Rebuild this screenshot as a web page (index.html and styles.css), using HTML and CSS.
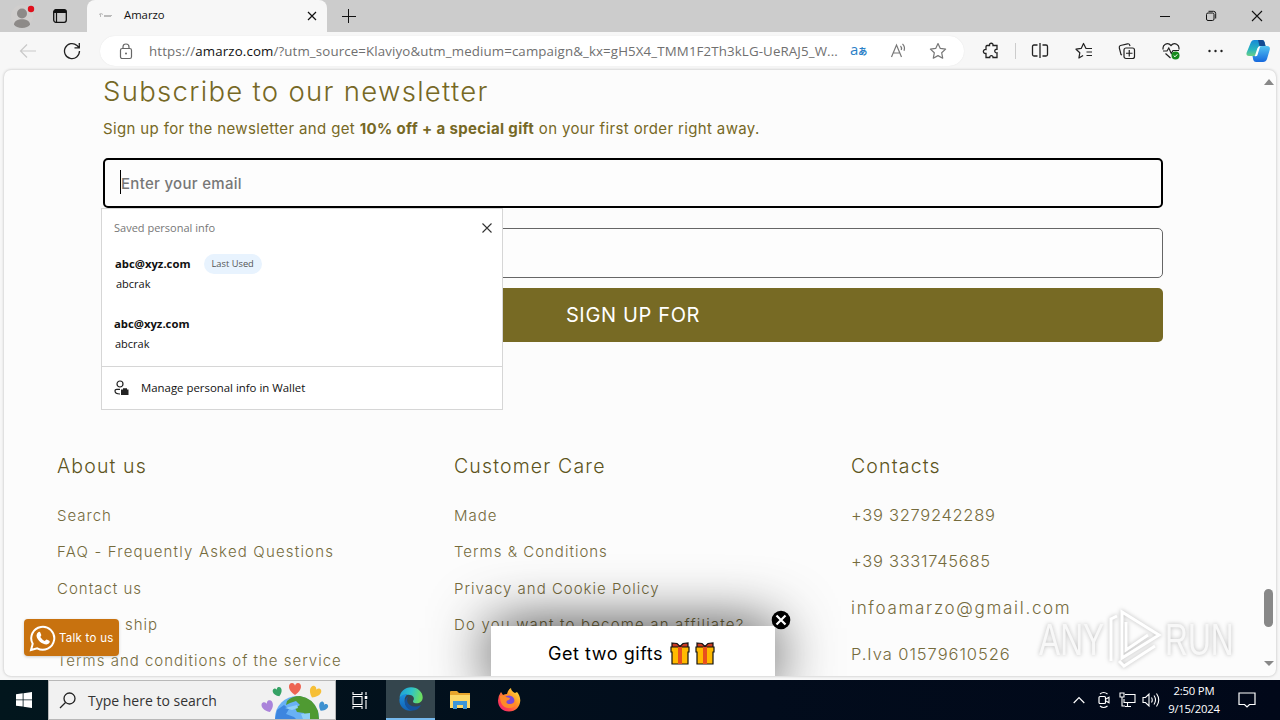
FILE: index.html
```html
<!DOCTYPE html>
<html lang="en">
<head>
<meta charset="utf-8">
<title>Amarzo</title>
<link rel="stylesheet" href="styles.css">
</head>
<body>
<div class="desktop">
  <header class="tabbar">
    <div class="profile">
      <svg width="30" height="30" viewBox="0 0 30 30"><circle cx="14" cy="15" r="11" fill="#d0cecd"/><circle cx="14" cy="12.500" r="5" fill="#8d8a88"/><path d="M6 23.500c0-7 16-7 16 0-2 4.500-14 4.500-16 0z" fill="#8d8a88"/><circle cx="23" cy="8" r="3.200" fill="#e0101c"/></svg>
    </div>
    <svg class="workspaces" width="16" height="16" viewBox="0 0 16 16"><rect x="1.700" y="1.700" width="12.600" height="12.600" rx="2.200" fill="none" stroke="#111" stroke-width="1.300"/><path d="M1.700 5V3.500Q2 1.500 4 1.500h8q2 0 2.300 2V5z" fill="#111"/><path d="M4.500 5v9" stroke="#111" stroke-width="1.200"/></svg>
    <div class="tab">
      <svg class="favicon" width="16" height="16" viewBox="0 0 16 16"><path d="M1 6.500q2-2 4 0M2.500 6v3M6 7.500h8M6 8.500h7" stroke="#bbb" fill="none"/></svg>
      <span class="tab-title">Amarzo</span>
      <svg class="tab-close" width="10" height="10" viewBox="0 0 10 10"><path d="M1 1l8 8M9 1l-8 8" stroke="#111" stroke-width="1.200"/></svg>
    </div>
    <svg class="newtab" width="14" height="14" viewBox="0 0 14 14"><path d="M6.500 0v14M0 7.500h14" stroke="#111"/></svg>
    <div class="winctl">
      <svg width="12" height="12" viewBox="0 0 12 12"><path d="M1 6.500h10" stroke="#111"/></svg>
      <svg width="12" height="12" viewBox="0 0 12 12"><rect x="1.500" y="3" width="7.500" height="7.500" rx="1.500" fill="none" stroke="#111"/><path d="M3.500 1.300h5q2.200 0 2.200 2.200v5" fill="none" stroke="#111"/></svg>
      <svg width="12" height="12" viewBox="0 0 12 12"><path d="M1 1l10 10M11 1L1 11" stroke="#111" stroke-width="1.100"/></svg>
    </div>
  </header>

  <nav class="toolbar">
    <svg class="back" width="18" height="16" viewBox="0 0 18 16"><path d="M17 8H2M8 1.500L1.500 8 8 14.500" fill="none" stroke="#c9c9c9" stroke-width="1.200"/></svg>
    <svg class="reload" width="18" height="18" viewBox="0 0 18 18"><path d="M16.500 9A7.500 7.500 0 1 1 14 3.500L16 5.500M16.300 1v4.800h-4.800" fill="none" stroke="#222" stroke-width="1.300"/></svg>
    <div class="address">
      <svg class="lock" width="14" height="17" viewBox="0 0 14 17"><rect x="1.500" y="5.500" width="11" height="10" rx="1.800" fill="none" stroke="#666" stroke-width="1.200"/><path d="M4 5.500V4q0-3 3-3t3 3v1.500" fill="none" stroke="#666" stroke-width="1.200"/><circle cx="7" cy="10.500" r="1" fill="#666"/></svg>
      <span class="url">https://<b>amarzo.com</b>/?utm_source=Klaviyo&amp;utm_medium=campaign&amp;_kx=gH5X4_TMM1F2Th3kLG-UeRAJ5_W...</span>
      <span class="translate">a<i>あ</i></span>
      <svg class="read" width="18" height="16" viewBox="0 0 18 16"><path d="M1.500 14L6.500 2l5 12M3.300 10h6.500M10.500 3q1.500 1.500.8 4M12.500.8q3 3 1.500 7" fill="none" stroke="#777" stroke-width="1.200"/></svg>
      <svg class="star" width="18" height="18" viewBox="0 0 18 18"><path d="M9 1.500l2.300 4.900 5.300.7-3.900 3.700 1 5.400L9 13.600l-4.700 2.600 1-5.400L1.400 7.100l5.300-.7z" fill="none" stroke="#777" stroke-width="1.200" stroke-linejoin="round"/></svg>
    </div>
    <div class="actions">
      <svg width="18" height="18" viewBox="0 0 18 18"><path d="M5 3.500h2.500c-.5-3 4-3 3.500 0h4v3.800c-3-.4-3 3.900 0 3.500v4.700h-4c.3-2.500-3.500-2.500-3.300 0H4v-4c-3.500.4-3.500-4.500 0-4V5q0-1.500 1-1.500z" fill="none" stroke="#222" stroke-width="1.300"/></svg>
      <i class="divider"></i>
      <svg width="18" height="18" viewBox="0 0 18 18"><path d="M6.500 3H3Q1.500 3 1.500 4.500v8Q1.500 14 3 14h3.500M11.500 3H15q1.500 0 1.500 1.500v8q0 1.500-1.500 1.500h-3.500M9 1v15" fill="none" stroke="#222" stroke-width="1.300"/></svg>
      <svg width="18" height="18" viewBox="0 0 18 18"><path d="M15 6.500h-4L8.500 1.500 6.200 6.400l-5.200.8 3.800 3.600-.9 5.200 4.200-2.500M11.500 6.500H17M11.500 10H17M11.500 13.500H17" fill="none" stroke="#222" stroke-width="1.200" stroke-linejoin="round"/></svg>
      <svg width="18" height="18" viewBox="0 0 18 18"><rect x="6" y="6" width="10.500" height="10.500" rx="2" fill="none" stroke="#222" stroke-width="1.200"/><path d="M11.250 8v6.500M8 11.250h6.500M4 13l-1-.5L1.300 5.800Q1 4 2.500 3.500l7-1.700q1.800-.3 2.200 1.200l.3 1" fill="none" stroke="#222" stroke-width="1.200"/></svg>
      <svg width="18" height="18" viewBox="0 0 18 18"><path d="M1.200 7.500C0 3 5.500-.5 9 3.500c3.500-4 9-.5 7.800 4M1 9h4l1.800-3 2.500 5.500L11 8.500h6M3.500 11.500L8.500 16" fill="none" stroke="#222" stroke-width="1.200"/><circle cx="13.500" cy="13.500" r="4" fill="#168a1c"/><path d="M11.700 13.500l1.300 1.300 2.300-2.500" fill="none" stroke="#fff"/></svg>
      <svg width="18" height="18" viewBox="0 0 18 18"><g fill="#222"><circle cx="3.500" cy="9" r="1.200"/><circle cx="9.500" cy="9" r="1.200"/><circle cx="15.500" cy="9" r="1.200"/></g></svg>
      <svg class="copilot" width="26" height="24" viewBox="0 0 26 24">
        <defs><linearGradient id="c1" x1="0" y1="0" x2="0" y2="1"><stop offset="0" stop-color="#1689d8"/><stop offset=".6" stop-color="#29b5bd"/><stop offset="1" stop-color="#6bcf86"/></linearGradient><linearGradient id="c2" x1="0" y1="0" x2="0" y2="1"><stop offset="0" stop-color="#52c4f2"/><stop offset="1" stop-color="#1668dd"/></linearGradient></defs>
        <path d="M6 3Q7 1 9 1h8q2 0 2.500 2l1 4h-4q-2 0-2.700 2l-2 6q-.6 2-3 2H4q-3 0-2.500-3z" fill="url(#c1)"/><path d="M20 7h2q3.500 0 2.800 3.500L22 20q-1 3-4 3h-7q-2 0-2.700-2L7.500 17h2q2 0 2.700-2L14 9q.6-2 3-2z" fill="url(#c2)"/><path d="M13 1h4q2 0 2.500 2l1 4h-6z" fill="#134a92"/><path d="M12.300 9.500q.6-2.500 3-2.500l-3 9.500q-.5 1-2.500.7z" fill="#fff"/>
      </svg>
    </div>
  </nav>

  <main class="viewport">
    <section class="newsletter">
      <h1 class="news-title">Subscribe to our newsletter</h1>
      <p class="news-text">Sign up for the newsletter and get <strong>10% off + a special gift</strong> on your first order right away.</p>
      <div class="field focused"><span class="caret"></span><span class="placeholder">Enter your email</span></div>
      <div class="field"></div>
      <div class="submit"><span class="submit-label">SIGN UP FOR</span></div>
      <aside class="autofill">
        <div class="af-head"><span>Saved personal info</span><svg width="10" height="10" viewBox="0 0 10 10"><path d="M.5.500l9 9M9.500.500l-9 9" stroke="#333" stroke-width="1.100"/></svg></div>
        <div class="af-item first"><div class="af-row"><b>abc@xyz.com</b><em>Last Used</em></div><span>abcrak</span></div>
        <div class="af-item"><div class="af-row"><b>abc@xyz.com</b></div><span>abcrak</span></div>
        <div class="af-foot"><svg width="16" height="16" viewBox="0 0 16 16"><circle cx="6" cy="4" r="3" fill="none" stroke="#222" stroke-width="1.200"/><path d="M6 9.300H2.800q-1.800 0-1.800 1.700 0 3 5 3" fill="none" stroke="#222" stroke-width="1.200"/><path d="M7 9.500h2V8.300h4v1.200h1.500V15H7z" fill="#222"/></svg><span>Manage personal info in Wallet</span></div>
      </aside>
    </section>

    <footer class="footer">
      <div class="col">
        <h2>About us</h2>
        <ul class="links"><li>Search</li><li class="wide">FAQ - Frequently Asked Questions</li><li>Contact us</li><li class="indent">ship</li><li>Terms and conditions of the service</li></ul>
      </div>
      <div class="col">
        <h2>Customer Care</h2>
        <ul class="links"><li>Made</li><li>Terms &amp; Conditions</li><li>Privacy and Cookie Policy</li><li class="wide">Do you want to become an affiliate?</li></ul>
      </div>
      <div class="col">
        <h2>Contacts</h2>
        <ul class="links contacts"><li>+39 3279242289</li><li>+39 3331745685</li><li class="mail">infoamarzo@gmail.com</li><li class="vat">P.Iva 01579610526</li></ul>
      </div>
    </footer>

    <div class="talk">
      <svg width="28" height="28" viewBox="0 0 28 28"><path d="M2 26l1.700-6.200A11.500 11.500 0 1 1 8.200 24.300z" fill="none" stroke="#fff" stroke-width="2"/><path d="M9.500 8q1.200-.6 1.800.6l1 2.400q.2.700-1 2 2 3 4.500 4 1.300-1.800 2-1.500l2.500 1.200q.8.500.3 1.800-.8 1.700-3 2c-5 0-10-5.300-10.100-9q.1-2.500 2-3.500z" fill="#fff"/></svg>
      <span>Talk to us</span>
    </div>

    <div class="promo">
      <span>Get two gifts</span>
      <svg class="gift" width="20" height="24" viewBox="0 0 20 24"><path d="M2 1l5 .5 3 3 3-3 5-.5v5H2z" fill="#c93a22" stroke="#111" stroke-width="1.200"/><path d="M1 5h18v5h-1v12H2V10H1z" fill="#ffb900" stroke="#111" stroke-width="1.200"/><path d="M8 5h4v17H8z" fill="#e8501e"/></svg>
      <svg class="gift" width="20" height="24" viewBox="0 0 20 24"><path d="M2 1l5 .5 3 3 3-3 5-.5v5H2z" fill="#c93a22" stroke="#111" stroke-width="1.200"/><path d="M1 5h18v5h-1v12H2V10H1z" fill="#ffb900" stroke="#111" stroke-width="1.200"/><path d="M8 5h4v17H8z" fill="#e8501e"/></svg>
      <svg class="promo-close" width="20" height="20" viewBox="0 0 20 20"><circle cx="10" cy="10" r="9.300" fill="#000"/><path d="M5.500 5.500l9 9M14.500 5.500l-9 9" stroke="#fff" stroke-width="2.200"/></svg>
    </div>

    <div class="watermark">
      <span>ANY</span>
      <svg width="56" height="62" viewBox="0 0 56 62" fill="none" stroke="#fff" stroke-width="3"><path d="M15 3v46l37-23z"/><path d="M10 7L4 10v42M19 13v28l22-15M12 52l5 5 31-20"/></svg>
      <span>RUN</span>
    </div>

    <div class="scrollbar"><i class="up"></i><i class="thumb"></i><i class="down"></i></div>
  </main>

  <div class="taskbar">
    <div class="start"><svg width="16" height="16" viewBox="0 0 16 16" fill="#fff"><path d="M0 2.300l6.700-1v6.200H0zM7.500 1.200L16 0v7.500H7.500zM0 8.300h6.700v6.300L0 13.700zM7.500 8.300H16V16l-8.500-1.200z"/></svg></div>
    <div class="search">
      <svg width="17" height="17" viewBox="0 0 17 17"><circle cx="10.500" cy="6.500" r="5.500" fill="none" stroke="#222" stroke-width="1.300"/><path d="M6.500 10.500L1 16" stroke="#222" stroke-width="1.300"/></svg>
      <span>Type here to search</span>
      <svg class="earth" width="72" height="38" viewBox="0 0 72 38">
        <defs><path id="heart" d="M0 9C-8 4-7-3-3-3-1-3 0-1 0 0 0-1 1-3 3-3 7-3 8 4 0 9z"/></defs>
        <circle cx="37" cy="37" r="22" fill="#69b1f5"/><path d="M27 20q5-5 13-5 13 2 18 15l1 8H47l-3-6-7-1-2-4 5-3-4-4-6 2-4 2z" fill="#4f9a32"/><path d="M17 29l7-5 5 4-3 5 8 3 2 2H15z" fill="#3d86df"/><path d="M25 27l12-3 1 3-6 2zM41 33l9-1v6h-7z" fill="#8fd0f7"/>
        <use href="#heart" x="35" y="5" fill="#ee6553"/><use href="#heart" transform="translate(17 9) rotate(-20) scale(.75)" fill="#36a265"/><use href="#heart" transform="translate(56 9) rotate(28) scale(.95)" fill="#f6bf36"/><use href="#heart" transform="translate(7 23) rotate(-20) scale(.95)" fill="#aa83da"/><use href="#heart" transform="translate(64 24) rotate(30) scale(.75)" fill="#3e91d0"/>
      </svg>
    </div>
    <div class="task taskview"><svg width="18" height="18" viewBox="0 0 18 18"><path d="M2 5.500h9v8H2zM2 1v2.500h9V1M2 18v-2.500h9V18M15 1v3M15 9v9" fill="none" stroke="#fff" stroke-width="1.100"/><path d="M13.700 5h2.600v3h-2.600z" fill="#fff"/></svg></div>
    <div class="task active"><svg width="24" height="24" viewBox="0 0 24 24">
      <defs><linearGradient id="e1" x1="0" y1="0" x2="1" y2=".2"><stop offset="0" stop-color="#1c9bd8"/><stop offset=".55" stop-color="#2fc3c8"/><stop offset="1" stop-color="#6bde62"/></linearGradient><linearGradient id="e2" x1="0" y1="0" x2="0" y2="1"><stop offset="0" stop-color="#1c8fdd"/><stop offset="1" stop-color="#1262b5"/></linearGradient></defs>
      <path d="M.5 11C1 4.500 6 .3 12 .3c7 0 11.700 5 11.700 10 0 4-3 6-6 6-3.500 0-4.500-1.500-3-3.500 1-2-1-5-5-5C5.500 7.800 2 9 .5 11z" fill="url(#e1)"/><path d="M.4 13C.5 8.500 5 6.500 9 7c-3 2-4 5-3 9 1 4 4.500 7 8 7.300C7 25.300.3 20 .4 13z" fill="url(#e2)"/><path d="M9.500 9.500C6.500 12 8 20 17 19.500c2.500-.3 4.500-1.500 5-1.300-2 4-5.500 5.500-9 5.200C5 22 3.500 12 9.500 9.500z" fill="#15529c"/></svg></div>
    <div class="task"><svg width="22" height="20" viewBox="0 0 22 20"><path d="M1 2q0-1 1-1h6l2 2h11v15H1z" fill="#e8a52c"/><path d="M1 5h20v13H1z" fill="#fdd868"/><path d="M4 11h14v8h-4v-4H8v4H4z" fill="#3c95d8"/></svg></div>
    <div class="task"><svg width="24" height="24" viewBox="0 0 24 24">
      <defs><linearGradient id="f1" x1="1" y1="0" x2="0" y2="1"><stop offset="0" stop-color="#fff04a"/><stop offset=".4" stop-color="#ff9a25"/><stop offset=".75" stop-color="#ff3c51"/><stop offset="1" stop-color="#e3208f"/></linearGradient></defs>
      <path d="M4 4l2 3q2-1 4-1 .500-4 4-6 0 3 4 5l2-1q3 3 3.300 8.500C23 19 18.500 23.500 12 23.500S1 19 1 12.500Q1 8 4 4z" fill="url(#f1)"/><circle cx="12" cy="13" r="5.500" fill="#7a49d8"/><path d="M3 8q4-2 6 1l4 1q0 2-3 2.500Q8 16 13 16q4 0 5-4 2 8-6 8C5 20 3 14 3 8z" fill="#ff8a29"/></svg></div>
    <div class="tray">
      <svg width="12" height="8" viewBox="0 0 12 8"><path d="M.7 7L6 1.500 11.300 7" fill="none" stroke="#fff" stroke-width="1.200"/></svg>
      <svg class="cam" width="14" height="18" viewBox="0 0 14 18"><rect x="2" y="5.500" width="6.500" height="7" rx="1" fill="none" stroke="#fff" stroke-width="1.200"/><path d="M9 8l3-1.700v5.500L9 10M3 3q3.500-3 7.500 0M3 15q3.500 3 7.500 0" fill="none" stroke="#fff" stroke-width="1.100"/></svg>
      <svg class="net" width="17" height="16" viewBox="0 0 17 16"><path d="M6 2.500h10v8H5V7M8.500 11v3.500M6 14.500h6M1 1h4v4H1zM3 5v9h3" fill="none" stroke="#fff" stroke-width="1.100"/></svg>
      <svg class="vol" width="18" height="16" viewBox="0 0 18 16"><path d="M1 5.500h2.500L7 2v12l-3.500-3.500H1zM9.500 5.500q1.500 2.500 0 5M12 3.500q3 4.500 0 9M14.500 1.500q4.500 6.500 0 13" fill="none" stroke="#fff" stroke-width="1.100"/></svg>
      <div class="clock"><span>2:50 PM</span><span>9/15/2024</span></div>
      <svg class="note" width="18" height="18" viewBox="0 0 18 18"><path d="M1 2h16v11.500h-5.500L9 16l-2.500-2.500H1z" fill="none" stroke="#fff" stroke-width="1.200"/></svg>
    </div>
  </div>
</div>
</body>
</html>
```
FILE: styles.css
```css
* { box-sizing: border-box; }
body { margin: 0; overflow: hidden; }
svg { display: block; flex: none; }
.desktop { width: 1280px; height: 720px; display: flex; flex-direction: column; background: #f7f7f7; font-family: "Open Sans", "Noto Sans", sans-serif; color: #111; }

/* Tab strip */
.tabbar { height: 32px; flex: none; display: flex; align-items: center; background: #cccccc; }
.profile { width: 30px; margin-left: 8px; }
.workspaces { margin-left: 14px; }
.tab { width: 240px; height: 32px; margin-left: 19px; padding: 0 10px 0 11px; display: flex; align-items: center; background: #f7f7f7; border-radius: 8px 8px 0 0; }
.tab-title { margin-left: 10px; flex: 1; font-size: 11.3px; line-height: 16px; padding-bottom: 2px; }
.newtab { margin-left: 15px; }
.winctl { margin-left: auto; display: flex; gap: 34px; padding-right: 17px; }

/* Toolbar */
.toolbar { height: 38px; flex: none; display: flex; align-items: center; background: #f7f7f7; }
.back { margin-left: 19px; }
.reload { margin-left: 26px; }
.address { width: 864px; height: 30px; margin-left: 19px; padding: 0 17px 0 19px; display: flex; align-items: center; background: #fff; border-radius: 15px; box-shadow: 0 0 1px #ddd; }
.url { margin-left: 16px; width: 690px; white-space: nowrap; font-size: 13.3px; letter-spacing: .12px; color: #707070; }
.url b { font-weight: 400; color: #111; }
.translate { margin: -3px 0 0 12px; width: 20px; white-space: nowrap; font-size: 15px; line-height: 16px; color: #2b7fc7; }
.translate i { font: 700 9px "Noto Sans CJK JP", sans-serif; }
.read { margin-left: 22px; }
.star { margin-left: 21px; }
.actions { flex: 1; display: flex; align-items: center; justify-content: space-between; padding: 0 9px 0 18px; }
.divider { width: 1px; height: 16px; margin: 0 -11px; background: #ccc; }
.copilot { margin-left: -5px; }

/* Page */
.viewport { position: relative; width: 1272px; height: 606px; flex: none; margin: 0 4px 4px; overflow: hidden; background: #fcfcfc; border-radius: 7px; box-shadow: 0 0 3px #b8b8b8; font-family: Inter, "Liberation Sans", sans-serif; color: #766825; }
.newsletter { position: relative; width: 1060px; margin-left: 99px; }
.news-title { margin: 0; height: 44px; line-height: 43px; font-size: 27.5px; font-weight: 300; letter-spacing: 1.3px; }
.news-text { margin: 0 0 14px; height: 30px; line-height: 30px; font-size: 15px; letter-spacing: .36px; }
.field { height: 50px; border: 1px solid #666; border-radius: 5px; background: #fdfdfd; margin-bottom: 10px; }
.focused { display: flex; align-items: center; border: 2px solid #000; margin-bottom: 20px; padding-left: 15px; }
.caret { width: 1px; height: 24px; margin-top: -2px; background: #000; }
.placeholder { font-size: 15px; font-weight: 500; letter-spacing: .3px; color: #777; }
.submit { height: 54px; border-radius: 5px; background: #776a24; display: flex; align-items: center; justify-content: center; color: #fff; }
.submit-label { font-size: 20px; letter-spacing: .65px; }

/* Autofill popup covers the form */
.autofill { position: absolute; left: -2px; top: 138px; width: 402px; height: 202px; border: 1px solid #d6d6d6; background: #fff; color: #111; font: 11.4px/16px "Open Sans", "Noto Sans", sans-serif; display: flex; flex-direction: column; }
.af-head { height: 37px; flex: none; padding: 0 10px 0 12px; display: flex; justify-content: space-between; align-items: center; font-size: 11px; color: #777; }
.af-item { height: 60px; flex: none; padding: 11px 12px; display: flex; flex-direction: column; gap: 4px; }
.af-item > span { font-size: 11px; padding-left: 1px; }
.af-item.first { height: 59px; padding: 10px 13px; }
.af-row { height: 16px; display: flex; align-items: center; gap: 13px; }
.af-row b { font-size: 11.3px; }
.af-row em { font-style: normal; font-size: 9.3px; line-height: 20px; padding: 0 8px; border-radius: 10px; background: #e8f3fe; color: #555; }
.af-foot { flex: none; height: 43px; margin-top: 1px; padding-left: 12px; border-top: 1px solid #d6d6d6; display: flex; align-items: center; gap: 11px; }

/* Footer */
.footer { margin: 102px 0 0 53px; display: grid; grid-template-columns: 397px 397px 1fr; }
.col h2 { margin: 0 0 17px; height: 44px; line-height: 45px; font-size: 19.5px; font-weight: 300; letter-spacing: 1.15px; color: #5d5420; }
.links { margin: 0; padding: 0; list-style: none; font-size: 15px; font-weight: 300; letter-spacing: 1px; color: #756b3c; }
.links li { height: 36.3px; line-height: 22px; white-space: nowrap; }
.links .wide { letter-spacing: 1.18px; }
.links .indent { padding-left: 68px; }
.contacts { font-size: 16.5px; letter-spacing: .7px; }
.contacts li { height: 46.4px; line-height: 20px; }
.contacts .mail { font-size: 17px; letter-spacing: 1.7px; }
.contacts .vat { letter-spacing: .95px; }

/* Floating elements above the page */
.talk { position: absolute; left: 20px; top: 549px; width: 95px; height: 37px; padding-left: 5px; display: flex; align-items: center; gap: 2px; border-radius: 4px; background: #c8720f; color: #fff; font-size: 11.5px; letter-spacing: .25px; box-shadow: 0 1px 3px #ccc; white-space: nowrap; }
.promo { position: absolute; left: 487px; top: 556px; width: 284px; height: 56px; padding-left: 57px; display: flex; align-items: center; background: #fff; color: #000; font-size: 18px; letter-spacing: .55px; box-shadow: 0 0 60px rgba(0,0,0,.8); }
.promo span { width: 122px; white-space: nowrap; padding-bottom: 2px; }
.gift + .gift { margin-left: 5px; }
.promo-close { position: absolute; left: 280px; top: -16px; }
.watermark { position: absolute; left: 1035px; top: 539px; display: flex; align-items: center; color: #f8f8f8; filter: drop-shadow(0 0 2px #bbb); font: 44px/62px "Liberation Sans", sans-serif; }
.watermark span { width: 72px; transform: scaleX(.72); transform-origin: left; }
.watermark svg { margin: 0 2px 0 -4px; }
.scrollbar { position: absolute; right: 0; top: 0; width: 15px; height: 100%; display: flex; flex-direction: column; align-items: center; }
.up, .down { border: 5px solid transparent; }
.up { margin-top: 4px; border-bottom: 6px solid #888; }
.thumb { width: 9px; height: 38px; margin-top: 504px; border-radius: 5px; background: #888; }
.down { margin-top: 34px; border-top: 5px solid #888; }

/* Taskbar */
.taskbar { height: 40px; flex: none; display: flex; background: linear-gradient(90deg, #02161d, #020c1c 60%, #010819); }
.start { width: 48px; display: grid; place-items: center; }
.search { width: 288px; border: 1px solid #b8b8b8; background: #f1f1f1; padding: 0 3px 0 10px; display: flex; align-items: center; }
.search span { margin-left: 12px; font-size: 14px; color: #333; white-space: nowrap; }
.earth { margin-left: auto; }
.task { width: 49px; display: grid; place-items: center; }
.taskview { width: 50px; padding-right: 2px; }
.active { background: #34454d; border-bottom: 2px solid #76b9ed; }
.tray { margin-left: auto; display: flex; align-items: center; padding-right: 24px; }
.cam { margin-left: 12px; }
.net { margin-left: 8px; }
.vol { margin-left: 6px; }
.clock { width: 54px; margin-left: 7px; display: flex; flex-direction: column; align-items: center; color: #fff; font-size: 11.3px; line-height: 18px; letter-spacing: -.2px; white-space: nowrap; }
.note { margin-left: 17px; }
```
